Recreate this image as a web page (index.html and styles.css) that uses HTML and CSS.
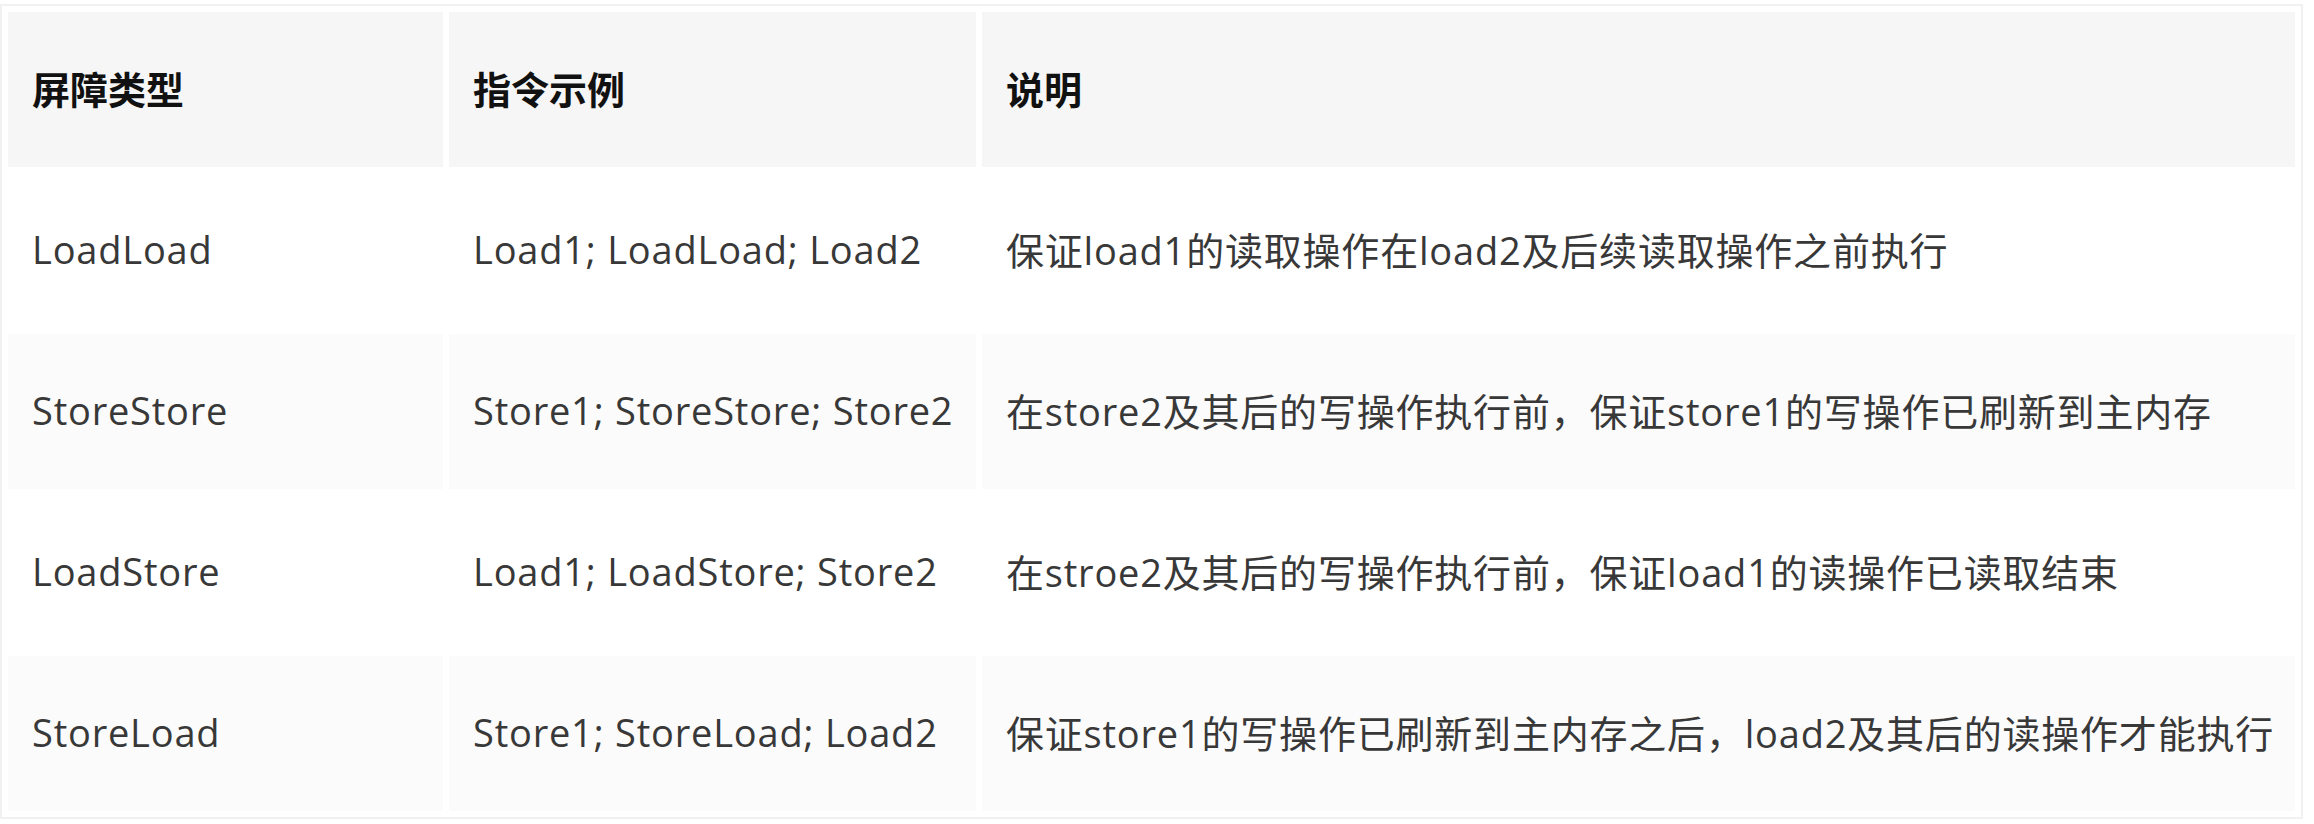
FILE: index.html
```html
<!DOCTYPE html>
<html lang="zh-CN">
<head>
<meta charset="utf-8">
<title>内存屏障类型</title>
<link rel="stylesheet" href="styles.css">
</head>
<body>
<div class="page">
  <table class="barrier-table">
    <colgroup>
      <col class="col-type">
      <col class="col-example">
      <col class="col-desc">
    </colgroup>
    <thead>
      <tr>
        <th>屏障类型</th>
        <th>指令示例</th>
        <th>说明</th>
      </tr>
    </thead>
    <tbody>
      <tr>
        <td>LoadLoad</td>
        <td>Load1; LoadLoad; Load2</td>
        <td>保证load1的读取操作在load2及后续读取操作之前执行</td>
      </tr>
      <tr>
        <td>StoreStore</td>
        <td>Store1; StoreStore; Store2</td>
        <td>在store2及其后的写操作执行前，保证store1的写操作已刷新到主内存</td>
      </tr>
      <tr>
        <td>LoadStore</td>
        <td>Load1; LoadStore; Store2</td>
        <td>在stroe2及其后的写操作执行前，保证load1的读操作已读取结束</td>
      </tr>
      <tr>
        <td>StoreLoad</td>
        <td>Store1; StoreLoad; Load2</td>
        <td>保证store1的写操作已刷新到主内存之后，load2及其后的读操作才能执行</td>
      </tr>
    </tbody>
  </table>
</div>
</body>
</html>
```

FILE: styles.css
```css
html, body {
  margin: 0;
  padding: 0;
  background: #ffffff;
}

.page {
  padding-top: 4px;
  font-family: "Open Sans", "Noto Sans CJK SC", sans-serif;
}

.barrier-table {
  table-layout: fixed;
  width: 2303px;
  border-collapse: separate;
  border-spacing: 6px;
  border: 2px solid #f1f1f1;
}

.col-type { width: 435px; }
.col-example { width: 527px; }
.col-desc { width: 1313px; }

.barrier-table th,
.barrier-table td {
  height: 155px;
  padding: 0 0 4px 24px;
  box-sizing: border-box;
  text-align: left;
  vertical-align: middle;
  white-space: nowrap;
  overflow: hidden;
}

.barrier-table th {
  background: #f6f6f6;
  color: #111111;
  font-weight: 700;
  font-size: 38px;
  font-family: "Noto Sans CJK SC", sans-serif;
}

.barrier-table td {
  color: #383838;
  font-size: 38px;
  font-weight: 400;
  letter-spacing: 0.8px;
}

.barrier-table tbody tr:nth-child(even) td {
  background: #fbfbfb;
}
```
